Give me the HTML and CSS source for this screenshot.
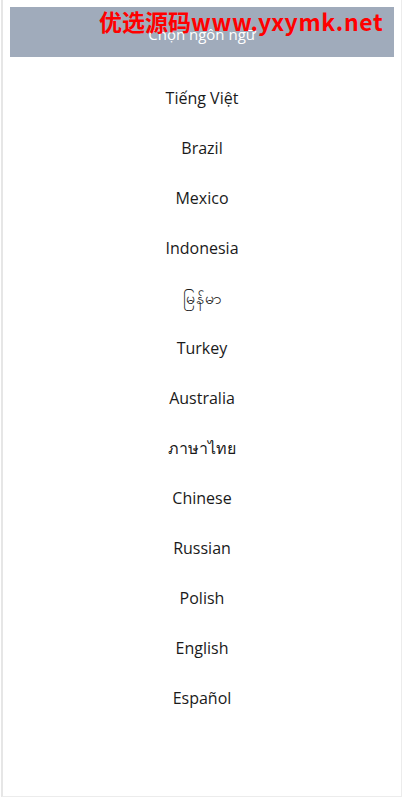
FILE: index.html
```html
<!DOCTYPE html>
<html>
<head>
<meta charset="utf-8">
<link rel="stylesheet" href="styles.css">
</head>
<body>
<div class="page">
  <div class="header">Chọn ngôn ngữ</div>
  <ul class="langs">
    <li>Tiếng Việt</li>
    <li>Brazil</li>
    <li>Mexico</li>
    <li>Indonesia</li>
    <li>မြန်မာ</li>
    <li>Turkey</li>
    <li>Australia</li>
    <li>ภาษาไทย</li>
    <li>Chinese</li>
    <li>Russian</li>
    <li>Polish</li>
    <li>English</li>
    <li>Español</li>
  </ul>
  <div class="watermark">优选源码<span class="wm-url">www.yxymk.net</span></div>
</div>
</body>
</html>
```
FILE: styles.css
```css
html, body {
  margin: 0;
  padding: 0;
  background: #ffffff;
}
body {
  font-family: "Open Sans", "Noto Sans", "DejaVu Sans", sans-serif;
}
.page {
  position: relative;
  box-sizing: border-box;
  margin-left: 1px;
  width: 401px;
  height: 797px;
  border: 1px solid #ececec;
  border-left: 2px solid #e6e6e6;
  border-top: none;
  padding: 7px 7px 0 7px;
}
.header {
  box-sizing: border-box;
  background: #a0abbb;
  height: 50px;
  padding-top: 4px;
  color: #ffffff;
  font-size: 15px;
  line-height: 46px;
  text-align: center;
}
.langs {
  list-style: none;
  margin: 16px 0 0 0;
  padding: 0;
}
.langs li {
  height: 50px;
  line-height: 50px;
  text-align: center;
  font-size: 16px;
  color: #1a1a1a;
}
.watermark {
  position: absolute;
  top: 6px;
  left: 96px;
  color: #ff0000;
  font-family: "Noto Sans CJK SC", "DejaVu Sans", sans-serif;
  font-weight: bold;
  font-size: 23px;
  line-height: 30px;
  white-space: nowrap;
}
.wm-url {
  letter-spacing: 0.6px;
}
```
